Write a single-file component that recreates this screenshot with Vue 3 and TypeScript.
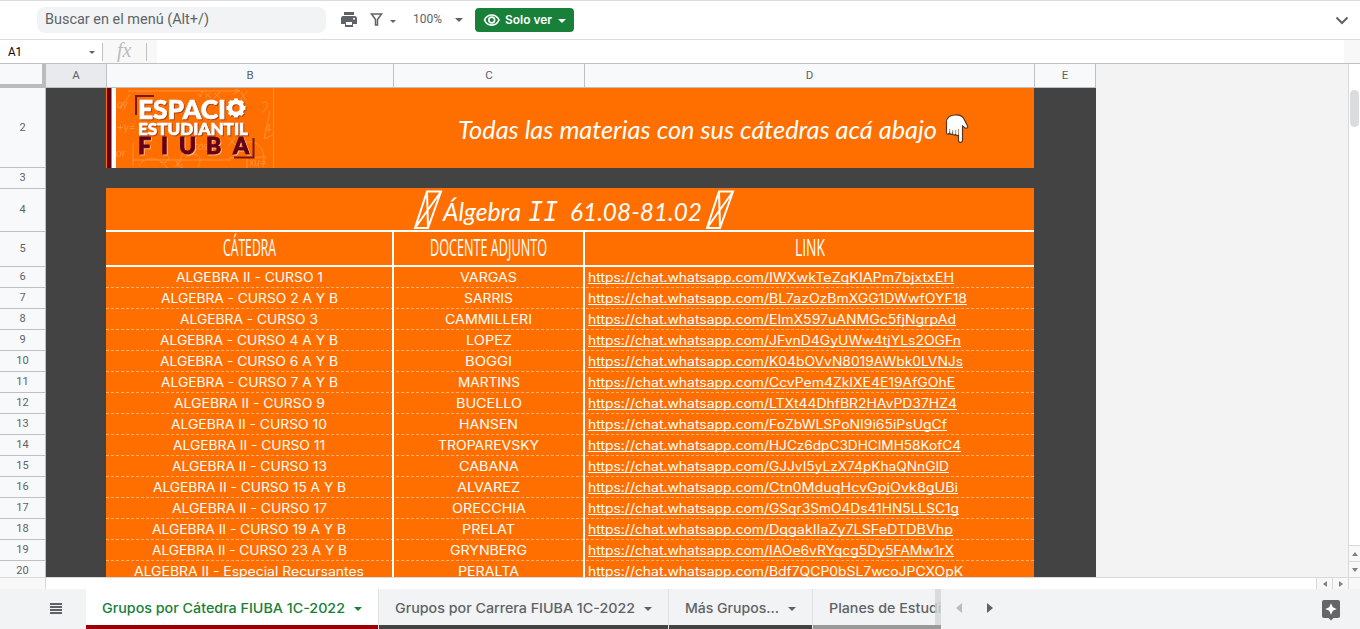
<script setup lang="ts">
import { h } from 'vue'

interface FitProps {
  text: string
  w: number
  height: number
  base: number
}

// Single line of text set to an exact measure.
const Fit = (p: FitProps) =>
  h('svg', { width: p.w, height: p.height, overflow: 'visible' }, [
    h('text', { x: 0, y: p.base, textLength: p.w, lengthAdjust: 'spacingAndGlyphs', fill: 'currentColor' }, p.text),
  ])
Fit.props = ['text', 'w', 'height', 'base']

interface Row {
  n: number
  name: string
  nw: number
  prof: string
  pw: number
  code: string
  cw: number
}

const prefix = 'https://chat.whatsapp.com/'
const raw: [string, number, string, number, string, number][] = [
  ['ALGEBRA II - CURSO 1', 147, 'VARGAS', 57, 'IWXwkTeZqKIAPm7bjxtxEH', 185],
  ['ALGEBRA - CURSO 2 A Y B', 177, 'SARRIS', 49, 'BL7azOzBmXGG1DWwfOYF18', 198],
  ['ALGEBRA - CURSO 3', 138, 'CAMMILLERI', 87, 'EImX597uANMGc5fjNgrpAd', 187],
  ['ALGEBRA - CURSO 4 A Y B', 178, 'LOPEZ', 46, 'JFvnD4GyUWw4tjYLs2OGFn', 192],
  ['ALGEBRA - CURSO 6 A Y B', 178, 'BOGGI', 47, 'K04bOVvN8019AWbk0LVNJs', 194],
  ['ALGEBRA - CURSO 7 A Y B', 177, 'MARTINS', 62, 'CcvPem4ZkIXE4E19AfGOhE', 186],
  ['ALGEBRA II - CURSO 9', 151, 'BUCELLO', 66, 'LTXt44DhfBR2HAvPD37HZ4', 188],
  ['ALGEBRA II - CURSO 10', 156, 'HANSEN', 59, 'FoZbWLSPoNI9i65iPsUgCf', 178],
  ['ALGEBRA II - CURSO 11', 152, 'TROPAREVSKY', 101, 'HJCz6dpC3DHCIMH58KofC4', 192],
  ['ALGEBRA II - CURSO 13', 155, 'CABANA', 60, 'GJJvI5yLzX74pKhaQNnGID', 180],
  ['ALGEBRA II - CURSO 15 A Y B', 193, 'ALVAREZ', 63, 'Ctn0MduqHcvGpjOvk8gUBi', 189],
  ['ALGEBRA II - CURSO 17', 155, 'ORECCHIA', 74, 'GSqr3SmO4Ds41HN5LLSC1g', 190],
  ['ALGEBRA II - CURSO 19 A Y B', 194, 'PRELAT', 53, 'DqgakIIaZy7LSFeDTDBVhp', 184],
  ['ALGEBRA II - CURSO 23 A Y B', 195, 'GRYNBERG', 77, 'IAOe6vRYqcg5Dy5FAMw1rX', 185],
  ['ALGEBRA II - Especial Recursantes', 230, 'PERALTA', 61, 'Bdf7QCP0bSL7wcoJPCXOpK', 194],
]
const rows: Row[] = raw.map(([name, nw, prof, pw, code, cw], i) => ({ n: i + 6, name, nw, prof, pw, code, cw }))
const teeth = [0, 45, 90, 135, 180, 225, 270, 315]
</script>

<template>
  <div class="app">
    <header class="toolbar">
      <div class="search"><Fit text="Buscar en el menú (Alt+/)" :w="164" :height="26" :base="17" /></div>
      <svg class="printer" width="18" height="16" viewBox="0 0 18 16">
        <path d="M4 0h10v3H4zM2.500 4h12A2.500 2.500 0 0 1 17 6.500V12h-3V9H4v3H1V6.500A2.500 2.500 0 0 1 2.500 4zM5 10h8v5H5z" fill="#5f6368" />
        <path d="M4 8.500h10V12h-1v3H5v-3H4z" fill="#5f6368" />
        <path d="M6 10h6v3H6z" fill="#fff" /><circle cx="14" cy="6.700" r="1" fill="#fff" />
      </svg>
      <svg class="funnel" width="13" height="13" viewBox="0 0 13 13">
        <path d="M1.500 1h10L7.500 6.500V12h-2V6.500z" fill="none" stroke="#5f6368" stroke-width="1.500" />
      </svg>
      <i class="tri tiny filter-tri"></i>
      <Fit class="zoom" text="100%" :w="29" :height="38" :base="22" />
      <i class="tri zoom-tri"></i>
      <button class="view">
        <svg width="18" height="14" viewBox="0 0 18 14">
          <path d="M1.500 7C4.500 .300 13 .300 16 7 13 13.700 4.500 13.700 1.500 7z" fill="none" stroke="#fff" stroke-width="1.700" />
          <circle cx="8.750" cy="7" r="2.900" fill="none" stroke="#fff" stroke-width="1.600" />
        </svg>
        <Fit class="view-text" text="Solo ver" :w="47" :height="24" :base="16" />
        <i class="tri white"></i>
      </button>
      <svg class="chevron" width="14" height="9" viewBox="0 0 14 9"><path d="M1.500 1.500 7 7l5.500-5.500" fill="none" stroke="#5f6368" stroke-width="2" /></svg>
    </header>

    <div class="formula">
      <div class="namebox"><Fit text="A1" :w="14" :height="23" :base="16" /><i class="tri tiny"></i></div>
      <div class="fx"><span>fx</span></div>
      <div class="input"></div>
      <div class="formula-end"></div>
    </div>

    <main class="sheet">
      <div class="colheads">
        <div class="corner"></div>
        <div class="sel">A</div><div>B</div><div>C</div><div>D</div><div>E</div>
      </div>
      <div class="body">
        <div class="rowheads">
          <div class="r2">2</div><div>3</div><div class="r4">4</div><div class="r5">5</div>
          <div v-for="r in rows" :key="r.n">{{ r.n }}</div>
        </div>
        <div class="cells">
          <section class="banner">
            <svg class="logo" width="168" height="80" viewBox="106 88 168 80">
              <g class="doodles" fill="none" stroke="#ff9c50" stroke-width="1" opacity=".75">
                <path d="M128 91h112l-5-2M233 94l7-3M273.500 88v80M231 160h-99M133 143v23M229 158l37-1M262 103c9-5 5 9 0 9M270 111l-6 28 13-6M241 92l5 9M248 91l-10 11M247 158v10M241 144c18-8 26 8 22 23M120 109l10-15M139 166c5-11 23-9 28 2M183 153l-5 13M185 158c8-8 20-3 13 9M198 93l2 4 3-7M205 93l6 5M211 92l-6 6M214 93l6 5M220 92l-6 6M229 138l6 7M235 137l-6 9M160 162c6 3 10-3 8-6" />
                <g class="doodle-text">
                  <text x="117" y="108">ay</text><text x="117" y="131">+y=</text><text x="116" y="157">or</text>
                  <text x="249" y="166">xu=</text><text x="175" y="167">x₂</text><text x="265" y="132">4</text>
                </g>
                <text class="doodle-text" x="193" y="150">cosx</text>
              </g>
              <path d="M107 88h4v80h-4z" fill="#650017" /><path d="M112 88h4v80h-4z" fill="#fff" />
              <path d="M154 96h-18v19M253.500 138v19.500H234" fill="none" stroke="#7b1712" stroke-width="2" />
              <g class="logo-text shadow" stroke="#fff" stroke-width=".7">
                <text x="138" y="118.500" font-size="27" textLength="88" lengthAdjust="spacingAndGlyphs">ESPACI</text>
                <text x="138" y="135" font-size="17.500" textLength="110" lengthAdjust="spacingAndGlyphs">ESTUDIANTIL</text>
              </g>
              <g class="gear" fill="none" stroke="#fff" transform="translate(236 108)">
                <circle r="6" stroke-width="4.500" />
                <path v-for="a in teeth" :key="a" d="M0-6.500V-9.500" stroke-width="4" :transform="`rotate(${a})`" />
              </g>
              <g class="logo-text fiuba" font-size="23" stroke="#650017" stroke-width=".9">
                <text x="138" y="154">F</text><text x="161" y="154">I</text><text x="179" y="154">U</text><text x="206" y="154">B</text><text x="233" y="154">A</text>
              </g>
            </svg>
            <Fit class="script slogan" text="Todas las materias con sus cátedras acá abajo" :w="479" :height="80" :base="51" />
            <svg class="hand" width="25" height="31" viewBox="0 0 25 31">
              <path d="M1.500 19V9C1 4 5 1 10 1c5-.300 8 2 9 4l3.500 7c1 2-1.500 3-3 1.500L17.500 12v14.500c0 2.500-4 2.500-4 0V20.500c-.500 1.800-2.700 1.500-3-.500-.500 1.800-2.800 1.500-3-.500-.600 1.300-2.600 1-3-.500C4 20.500 1.500 20.500 1.500 19z" fill="#fff" stroke="#573524" stroke-width="1.200" />
              <path d="M4.700 15v4M7.700 16v4M10.700 16v4M13.500 15v5" stroke="#926b55" stroke-width=".8" />
            </svg>
          </section>
          <section class="title">
            <svg class="mark" width="31" height="40" viewBox="0 0 31 40"><path d="M15 2.500H29L16 39H3zM15 2.500 16 39M29 2.500 3 39" fill="none" stroke="#fff" stroke-width="2" /></svg>
            <Fit class="script w1" text="Álgebra" :w="78" :height="42" :base="33" />
            <Fit class="script serif" text="II" :w="30" :height="42" :base="33" />
            <Fit class="script w3" text="61.08-81.02" :w="132" :height="42" :base="33" />
            <svg class="mark" width="31" height="40" viewBox="0 0 31 40"><path d="M15 2.500H29L16 39H3zM15 2.500 16 39M29 2.500 3 39" fill="none" stroke="#fff" stroke-width="2" /></svg>
          </section>
          <section class="heads">
            <div><Fit text="CÁTEDRA" :w="53" :height="33" :base="24" /></div>
            <div><Fit text="DOCENTE ADJUNTO" :w="117" :height="33" :base="24" /></div>
            <div><Fit text="LINK" :w="30" :height="33" :base="24" /></div>
          </section>
          <section v-for="r in rows" :key="r.n" class="row">
            <div><Fit :text="r.name" :w="r.nw" :height="20" :base="15" /></div>
            <div><Fit :text="r.prof" :w="r.pw" :height="20" :base="15" /></div>
            <div><a><Fit :text="prefix" :w="181" :height="16" :base="15" /><Fit :text="r.code" :w="r.cw" :height="16" :base="15" /></a></div>
          </section>
        </div>
        <div class="empty"></div>
      </div>
      <aside class="vscroll">
        <div class="thumb"></div>
        <div class="step"><svg width="6" height="4"><path d="M0 4l3-4 3 4z" /></svg></div>
        <div class="step"><svg width="6" height="4"><path d="M0 0h6L3 4z" /></svg></div>
      </aside>
    </main>

    <div class="hscroll">
      <div class="hleft"></div><div class="track"></div>
      <div class="hstep"><svg width="4" height="6"><path d="M4 0v6L0 3z" /></svg></div>
      <div class="hstep"><svg width="4" height="6"><path d="M0 0v6l4-3z" /></svg></div>
      <div class="hstep"></div>
    </div>

    <footer class="tabs">
      <div class="menu"><svg width="12" height="11"><path d="M0 1h12M0 4h12M0 7h12M0 10h12" stroke="#5f6368" stroke-width="2" /></svg></div>
      <div class="tab active"><Fit text="Grupos por Cátedra FIUBA 1C-2022" :w="243" :height="36" :base="24" /><i class="tri"></i></div>
      <div class="tab t2"><Fit text="Grupos por Carrera FIUBA 1C-2022" :w="240" :height="36" :base="24" /><i class="tri"></i></div>
      <div class="tab t3"><Fit text="Más Grupos..." :w="94" :height="36" :base="24" /><i class="tri"></i></div>
      <div class="tab t4"><Fit text="Planes de Estudio" :w="121" :height="36" :base="24" /></div>
      <div class="nav">
        <svg width="6" height="10"><path d="M6 0v10L0 5z" fill="#b9bbbd" /></svg>
        <svg width="6" height="10"><path d="M0 0v10l6-5z" fill="#5f6368" /></svg>
      </div>
      <svg class="explore" width="18" height="21" viewBox="0 0 18 21">
        <path d="M2 0h14a2 2 0 0 1 2 2v14a2 2 0 0 1-2 2h-4.500L9 20.500 6.500 18H2a2 2 0 0 1-2-2V2a2 2 0 0 1 2-2z" fill="#666" />
        <path d="M9 3.300 10.800 7.200 14.700 9l-3.900 1.800L9 14.700l-1.800-3.900L3.300 9l3.900-1.800z" fill="#fff" />
      </svg>
    </footer>
  </div>
</template>

<style>
body { margin: 0; overflow: hidden; background: #fff; }
</style>

<style scoped>
.app { width: 1360px; height: 629px; overflow: hidden; display: flex; flex-direction: column; background: #fff; font-family: Roboto, "Liberation Sans", sans-serif; color: #5f6368; }
.app *, .app { box-sizing: border-box; }
svg { display: block; flex: none; }
.tri { display: block; flex: none; width: 0; height: 0; border: 4px solid transparent; border-top-color: #5f6368; border-bottom: 0; }
.tri.tiny { border-width: 3px; border-bottom: 0; }
.tri.white { border-top-color: #fff; margin-left: 6px; margin-top: 2px; }
.toolbar { height: 40px; flex: none; display: flex; align-items: center; border-top: 1px solid #dadce0; border-bottom: 1px solid #dadce0; }
.search { margin-left: 37px; width: 289px; height: 26px; padding-left: 8px; border-radius: 8px; background: #f1f3f4; font-size: 14px; }
.printer { margin-left: 14px; }
.funnel { margin-left: 12px; margin-top: -1px; }
.filter-tri { margin: 3px 0 0 7px; }
.zoom { margin-left: 17px; font-size: 12.500px; }
.zoom-tri { margin-left: 13px; }
.view { margin-left: 12px; width: 99px; height: 24px; padding: 0 0 0 8px; border: 0; border-radius: 4px; background: #188038; color: #fff; display: flex; align-items: center; }
.view-text { margin-left: 4px; font: 600 12px Inter, sans-serif; }
.chevron { margin-left: auto; margin-right: 11px; }
.formula { height: 24px; flex: none; display: flex; border-bottom: 1px solid #c0c0c0; }
.namebox { width: 103px; display: flex; align-items: center; justify-content: space-between; padding: 0 8px 0 8px; font-size: 13px; color: #000; position: relative; }
.namebox .tri { margin-top: 1px; }
.namebox::after { content: ""; width: 1px; height: 18px; background: #c0c0c0; position: absolute; right: 0; top: 3px; }
.fx { width: 44px; display: flex; align-items: center; padding-left: 14px; background: #f8f8f8; font: italic 20px/20px "Liberation Serif", serif; color: #bbb; }
.fx span { margin-top: -4px; }
.input { flex: 1; position: relative; background: linear-gradient(90deg, #f8f8f8 10px, #fff 10px); }
.input::before { content: ""; position: absolute; left: -1px; top: 3px; width: 1px; height: 18px; background: #c0c0c0; }
.formula-end { width: 16px; background: #f8f8f8; }
.sheet { height: 513px; flex: none; display: grid; grid-template: 24px 489px / 1348px 12px; }
.colheads { display: flex; background: #f3f3f3; }
.colheads div { width: 61px; border-right: 1px solid #c0c0c0; border-bottom: 1px solid #c0c0c0; background: #f8f9fa; font-size: 11.500px; line-height: 23px; text-align: center; }
.colheads .corner { width: 46px; border-right: 4px solid #bcbcbc; border-bottom: 4px solid #bcbcbc; }
.colheads .sel { background: #e8eaed; }
.colheads div:nth-child(3) { width: 287px; }
.colheads div:nth-child(4) { width: 191px; }
.colheads div:nth-child(5) { width: 450px; }
.body { grid-row: 2; display: flex; overflow: hidden; }
.rowheads { width: 46px; border-right: 1px solid #c0c0c0; background: #f8f9fa; font-size: 11px; text-align: center; }
.rowheads div { height: 21px; line-height: 20px; border-bottom: 1px solid #c0c0c0; }
.rowheads .r2 { height: 80px; line-height: 79px; }
.rowheads .r4 { height: 43px; line-height: 42px; }
.rowheads .r5 { height: 35px; line-height: 34px; }
.cells { width: 1050px; padding: 0 62px 0 60px; background: #434343; color: #fff; }
.banner { height: 80px; background: #ff6f00; display: flex; }
.slogan { margin-left: 184px; }
.script { font-family: "Lato", sans-serif; font-style: italic; font-size: 25px; }
.hand { margin: 26px 0 0 8px; }
.doodle-text { font: italic 11px "Lato", sans-serif; fill: #ff9c50; stroke: none; }
.logo-text { font-family: Lato, sans-serif; font-weight: 900; fill: #fff; }
.shadow, .gear { filter: drop-shadow(1px 1px 0 #a9451a); }
.fiuba { fill: #650017; filter: drop-shadow(1px 1px 0 #fff8); }
.title { margin-top: 20px; height: 44px; border-bottom: 2px solid #fff; background: #ff6f00; display: flex; padding-left: 306px; }
.mark { margin-top: 1px; }
.title .serif { margin-left: 7px; font-family: "Liberation Mono", monospace; font-size: 30px; }
.title .w3 { margin: 0 2px 0 12px; }
.heads, .row { display: grid; grid-template-columns: 288px 191px 449px; background: #ff6f00; }
.heads { height: 35px; border-bottom: 2px solid #fff; font-family: "Open Sans", sans-serif; font-size: 24px; }
.heads div, .row > div { display: flex; justify-content: center; border-right: 2px solid #fff; }
.heads div:last-child, .row > div:last-child { border-right: 0; }
.row { height: 21px; font-family: Inter, sans-serif; font-size: 12.800px; background: repeating-linear-gradient(90deg, #ffb27a 0 3px, #ff6f00 3px 5px) 0 100% / 100% 1px no-repeat #ff6f00; }
.row > div:last-child { justify-content: flex-start; padding-left: 3px; }
.row a { display: flex; height: 17px; border-bottom: 1px solid #fff; }
.empty { flex: 1; background: #f3f3f3; }
.vscroll { grid-row: 1 / 3; grid-column: 2; display: flex; flex-direction: column; border-left: 1px solid #d9d9d9; background: #fff; }
.thumb { width: 9px; height: 37px; margin: 26px 1px auto; border-radius: 5px; background: #dadce0; }
.step { height: 16px; flex: none; border-top: 1px solid #d9d9d9; background: #f8f8f8; display: grid; place-items: center; fill: #808080; }
.hscroll { height: 12px; flex: none; display: flex; border-top: 1px solid #d9d9d9; }
.hleft { width: 46px; border-right: 1px solid #d9d9d9; background: #f8f8f8; }
.track { width: 1270px; }
.hstep { width: 16px; border-left: 1px solid #d9d9d9; background: #f8f8f8; display: grid; place-items: center; fill: #808080; }
.hstep:last-child { width: 12px; }
.tabs { height: 40px; flex: none; display: flex; background: #f1f3f4; }
.menu { width: 86px; padding: 14px 0 0 50px; }
.tab { height: 40px; display: flex; gap: 9px; align-items: center; padding-left: 15.500px; border-bottom: 4px solid #434343; font: 500 13.300px Inter, sans-serif; position: relative; margin-right: 1px; }
.tab::after { content: ""; position: absolute; right: -1px; top: 0; width: 1px; height: 40px; background: #dfe1e3; }
.tab .tri { margin-top: 3px; }
.active { width: 292px; background: #fff; color: #188038; border-color: #990000; }
.active .tri { border-top-color: #188038; }
.t2 { width: 289px; }
.t3 { width: 143px; }
.t4 { width: 128px; border-color: #999; overflow: hidden; margin-right: 0; }
.t4::after { right: 0; width: 6px; height: 40px; background: #d3d5d6d0; }
.nav { height: 40px; display: flex; align-items: center; gap: 25px; padding: 0 0 2px 15px; background: #f1f3f4; }
.explore { margin: 11px 20px 0 auto; }
</style>
